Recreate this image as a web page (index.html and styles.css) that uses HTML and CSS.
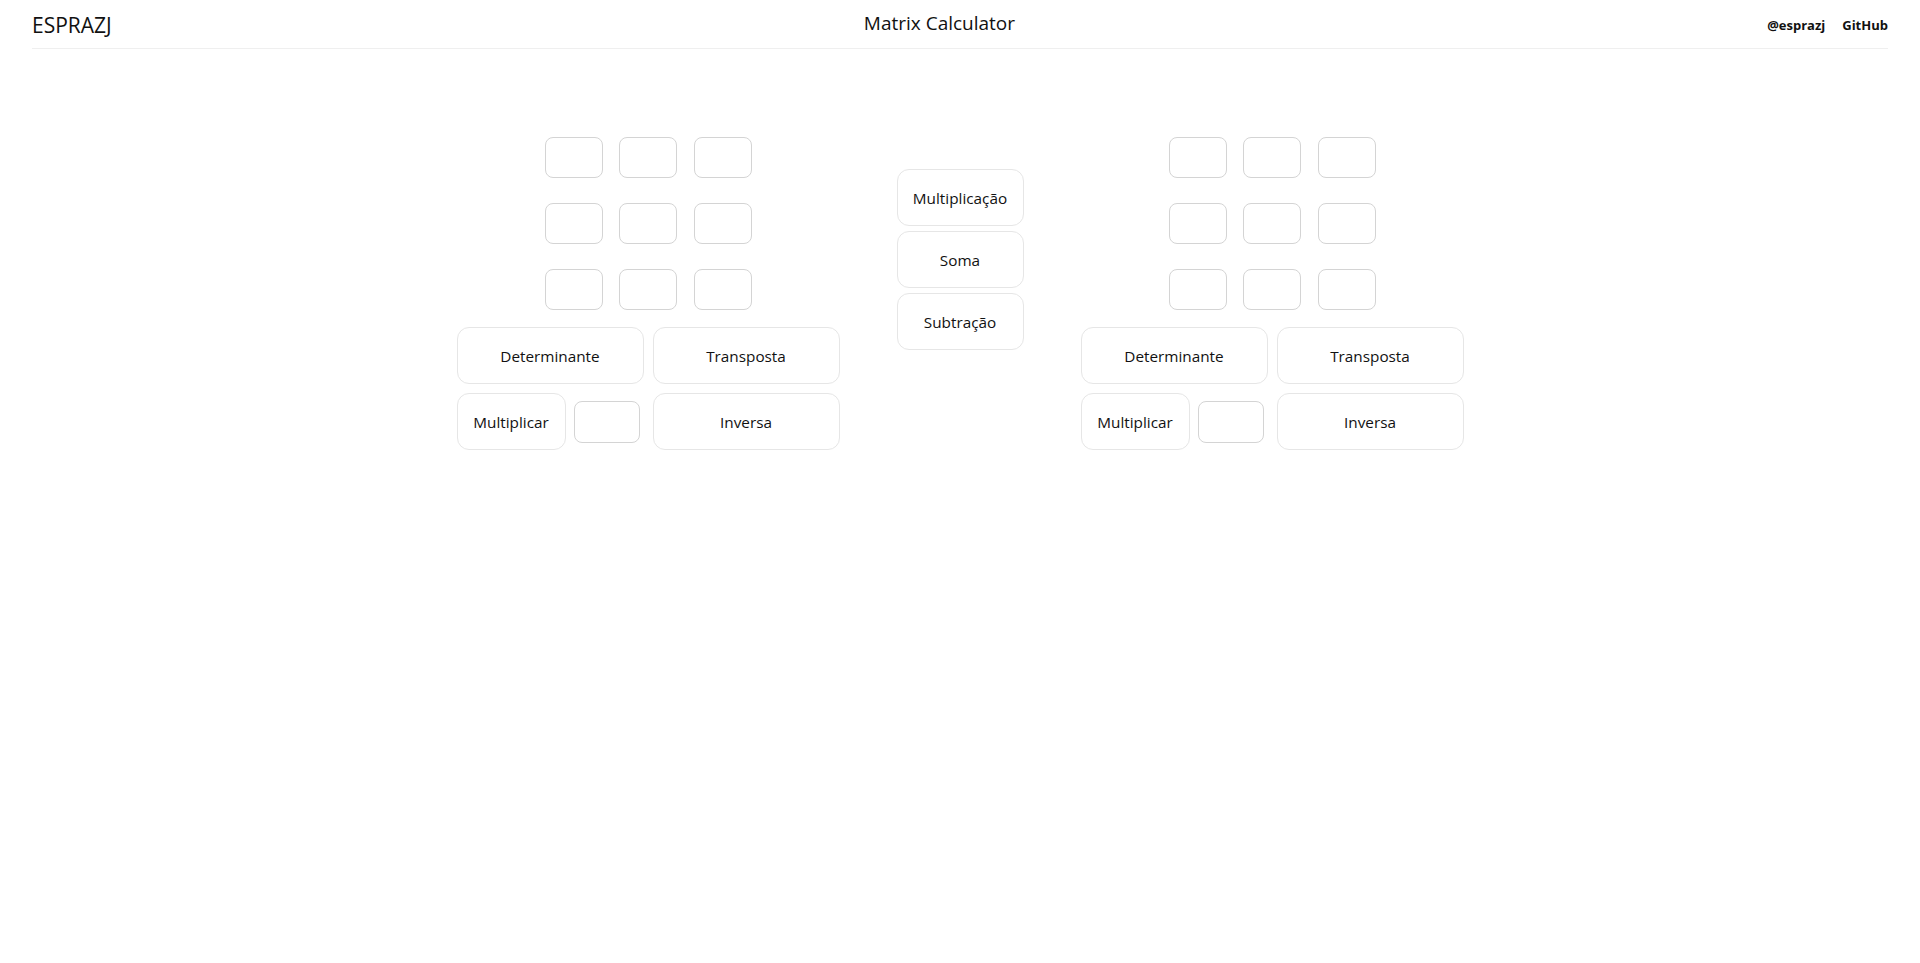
FILE: index.html
```html
<!DOCTYPE html>
<html lang="pt">
<head>
<meta charset="utf-8">
<title>Matrix Calculator</title>
<link rel="stylesheet" href="styles.css">
</head>
<body>
<header class="topbar">
  <div class="brand">ESPRAZJ</div>
  <div class="title">Matrix Calculator</div>
  <nav class="links"><a href="#">@esprazj</a><a href="#">GitHub</a></nav>
</header>
<main class="calc">
  <section class="panel">
    <div class="matrix">
      <input class="cell"><input class="cell"><input class="cell">
      <input class="cell"><input class="cell"><input class="cell">
      <input class="cell"><input class="cell"><input class="cell">
    </div>
    <div class="actions">
      <button class="btn">Determinante</button>
      <button class="btn">Transposta</button>
      <div class="mult">
        <button class="btn btn-mult">Multiplicar</button>
        <input class="scalar">
      </div>
      <button class="btn">Inversa</button>
    </div>
  </section>
  <section class="ops">
    <button class="btn">Multiplicação</button>
    <button class="btn">Soma</button>
    <button class="btn">Subtração</button>
  </section>
  <section class="panel">
    <div class="matrix">
      <input class="cell"><input class="cell"><input class="cell">
      <input class="cell"><input class="cell"><input class="cell">
      <input class="cell"><input class="cell"><input class="cell">
    </div>
    <div class="actions">
      <button class="btn">Determinante</button>
      <button class="btn">Transposta</button>
      <div class="mult">
        <button class="btn btn-mult">Multiplicar</button>
        <input class="scalar">
      </div>
      <button class="btn">Inversa</button>
    </div>
  </section>
</main>
</body>
</html>
```
FILE: styles.css
```css
* { box-sizing: border-box; }
body {
  margin: 0;
  background: #fff;
  color: #111;
  font-family: "Open Sans", "Noto Sans", sans-serif;
}
.topbar {
  margin: 0 32px;
  height: 49px;
  display: flex;
  justify-content: space-between;
  align-items: center;
  border-bottom: 1px solid #efefef;
}
.brand {
  font-size: 21px;
  padding-top: 2px;
}
.title {
  font-size: 19px;
  margin-top: -2px;
}
.links {
  display: flex;
  gap: 17px;
  padding-top: 2px;
}
.links a {
  color: #111;
  text-decoration: none;
  font-weight: 700;
  font-size: 13px;
}
.calc {
  display: flex;
  justify-content: center;
  align-items: flex-start;
  gap: 57px;
  padding-top: 88px;
}
.panel {
  width: 383px;
  display: flex;
  flex-direction: column;
  align-items: center;
  gap: 17px;
}
.matrix {
  display: grid;
  grid-template-columns: repeat(3, 58px);
  grid-auto-rows: 41px;
  column-gap: 16.5px;
  row-gap: 25px;
}
.cell, .scalar {
  border: 1px solid #d4d4d4;
  border-radius: 8px;
  background: #fff;
  font: inherit;
  outline: none;
}
.actions {
  width: 100%;
  display: grid;
  grid-template-columns: 187px 187px;
  grid-auto-rows: 57px;
  gap: 9px;
}
.btn {
  border: 1px solid #e6e6e6;
  border-radius: 12px;
  background: #fff;
  color: #111;
  font-family: inherit;
  font-size: 15.3px;
  padding: 0;
  cursor: pointer;
}
.mult {
  display: flex;
  align-items: center;
  gap: 8px;
}
.btn-mult {
  width: 109px;
  height: 57px;
}
.scalar {
  width: 66px;
  height: 42px;
}
.ops {
  width: 127px;
  margin-top: 32px;
  display: flex;
  flex-direction: column;
  gap: 5px;
}
.ops .btn {
  height: 57px;
}
```
